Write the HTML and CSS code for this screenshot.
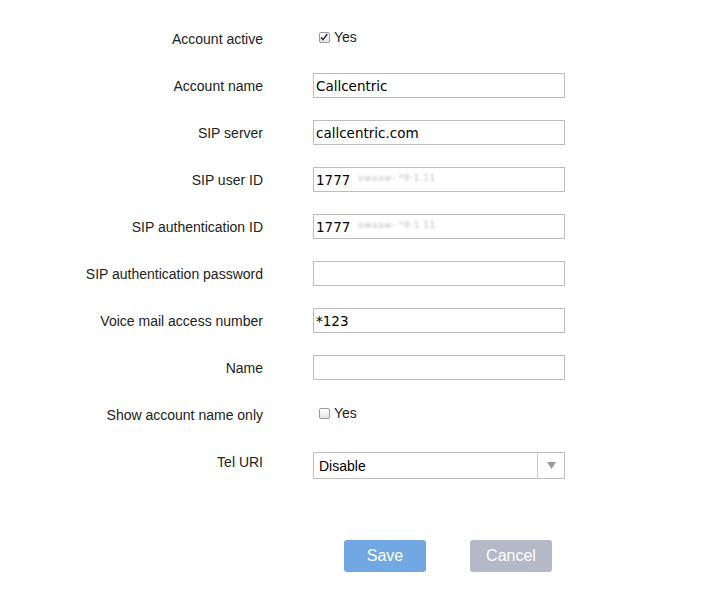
FILE: index.html
```html
<!DOCTYPE html>
<html lang="en">
<head>
    <meta charset="UTF-8">
    <meta name="viewport" content="width=device-width, initial-scale=1.0">
    <title>SIP Account</title>
    <link rel="stylesheet" href="styles.css">
</head>
<body>
    <form class="account-form">
        <div class="row">
            <label class="label">Account active</label>
            <div class="check-wrap">
                <span class="box checked">
                    <svg width="11" height="11" viewBox="0 0 11 11"><path d="M2.2 5.4 L4.4 7.8 L9.2 1.6" fill="none" stroke="#333" stroke-width="1.6"/></svg>
                </span>
                <span>Yes</span>
            </div>
        </div>

        <div class="row">
            <label class="label">Account name</label>
            <input class="text" type="text" value="Callcentric">
        </div>

        <div class="row">
            <label class="label">SIP server</label>
            <input class="text" type="text" value="callcentric.com">
        </div>

        <div class="row">
            <label class="label">SIP user ID</label>
            <div class="field">
                <input class="text" type="text" value="1777">
                <span class="blur">owaaw- *9:1.11</span>
            </div>
        </div>

        <div class="row">
            <label class="label">SIP authentication ID</label>
            <div class="field">
                <input class="text" type="text" value="1777">
                <span class="blur">owaaw- *9:1.11</span>
            </div>
        </div>

        <div class="row">
            <label class="label">SIP authentication password</label>
            <input class="text" type="password" value="">
        </div>

        <div class="row">
            <label class="label">Voice mail access number</label>
            <input class="text" type="text" value="*123">
        </div>

        <div class="row">
            <label class="label">Name</label>
            <input class="text" type="text" value="">
        </div>

        <div class="row">
            <label class="label">Show account name only</label>
            <div class="check-wrap">
                <span class="box"></span>
                <span>Yes</span>
            </div>
        </div>

        <div class="row">
            <label class="label">Tel URI</label>
            <div class="select">
                <span class="select-value">Disable</span>
                <span class="select-arrow">
                    <svg width="9" height="7" viewBox="0 0 9 7"><path d="M0 0 H9 L4.5 7 Z" fill="#9a9a9a"/></svg>
                </span>
            </div>
        </div>

        <div class="buttons">
            <button type="button" class="btn save">Save</button>
            <button type="button" class="btn cancel">Cancel</button>
        </div>
    </form>
</body>
</html>
```

FILE: styles.css
```css
body {
    margin: 0;
    background: #fff;
    font-family: 'Liberation Sans', Arial, sans-serif;
    font-size: 14px;
    color: #222;
}
.account-form {
    display: flex;
    flex-direction: column;
    gap: 22px;
    padding-top: 26px;
}
.row {
    display: grid;
    grid-template-columns: 263px 252px;
    column-gap: 50px;
    height: 25px;
}
.label {
    text-align: right;
    line-height: 25px;
    padding-top: 1px;
    white-space: nowrap;
}
.text {
    box-sizing: border-box;
    width: 252px;
    height: 25px;
    margin: 0;
    padding: 0 2px;
    border: 1px solid #bdbdbd;
    border-radius: 0;
    font-family: 'DejaVu Sans', Verdana, sans-serif;
    font-size: 13.5px;
    color: #000;
    outline: none;
}
.field {
    position: relative;
}
.blur {
    position: absolute;
    left: 45px;
    top: 6px;
    font-family: 'DejaVu Sans', Verdana, sans-serif;
    font-size: 9px;
    letter-spacing: 0.5px;
    color: #bfbfbf;
    filter: blur(1px);
}
.check-wrap {
    display: flex;
    align-items: center;
    gap: 4px;
    margin-top: -3px;
    padding-left: 6px;
    line-height: 25px;
}
.box {
    box-sizing: border-box;
    width: 11px;
    height: 11px;
    border: 1px solid #9b9b9b;
    border-radius: 2px;
    background: linear-gradient(#fdfdfd, #e6e6e6);
    display: flex;
}
.box svg {
    margin: -1px 0 0 -1px;
}
.select {
    box-sizing: border-box;
    width: 252px;
    height: 27px;
    margin-top: 3px;
    border: 1px solid #bdbdbd;
    display: flex;
    align-items: center;
}
.select-value {
    flex: 1;
    padding-left: 5px;
    color: #000;
}
.select-arrow {
    width: 26px;
    height: 100%;
    border-left: 1px solid #d0d0d0;
    display: flex;
    align-items: center;
    justify-content: center;
}
.buttons {
    display: flex;
    gap: 44px;
    padding-left: 344px;
    margin-top: 44px;
}
.btn {
    width: 82px;
    height: 32px;
    border: none;
    border-radius: 3px;
    color: #fff;
    font-family: 'Liberation Sans', Arial, sans-serif;
    font-size: 16px;
    cursor: pointer;
}
.save {
    background: #71a7e3;
}
.cancel {
    background: #b5b8c7;
}
```
